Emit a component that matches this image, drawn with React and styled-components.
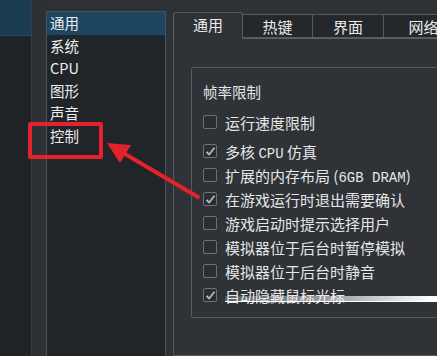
import React from 'react'
import styled, { createGlobalStyle } from 'styled-components'

const GlobalStyle = createGlobalStyle`
  html, body {
    margin: 0;
    padding: 0;
    background: #2e3237;
    overflow: hidden;
  }
`

const Screen = styled.div`
  position: relative;
  display: flex;
  width: 437px;
  height: 356px;
  overflow: hidden;
  background: #2e3237;
  font-family: "Noto Sans CJK SC", "Noto Sans", sans-serif;
  color: #e8e8e8;
`

const OuterEdge = styled.div`
  display: flex;
  flex-direction: column;
  width: 31px;
  flex-shrink: 0;
  background: #1f2226;
`

const EdgeTop = styled.div`
  height: 35px;
  background: #1a3b50;
  border-bottom: 1px solid #26485c;
`

const Strip = styled.div`
  width: 14px;
  flex-shrink: 0;
  background: #2d3136;
  border-left: 1px solid #383c42;
`

const ListBox = styled.div`
  margin-top: 11px;
  width: 118px;
  flex-shrink: 0;
  background: #212428;
  border: 1px solid #4c5157;
  border-bottom: none;
  padding: 0;
`

const ListItem = styled.div`
  height: 22.5px;
  line-height: 22px;
  padding-left: 3px;
  font-size: 14.5px;
  background: ${({ active }) => (active ? '#1c4662' : 'transparent')};
  color: #eeeeee;
`

const Gap = styled.div`
  width: 7px;
  flex-shrink: 0;
`

const TabWidget = styled.div`
  display: flex;
  flex-direction: column;
  width: 320px;
  flex-shrink: 0;
  padding-top: 11px;
`

const TabBar = styled.div`
  display: flex;
  align-items: flex-end;
  height: 27px;
  position: relative;
  z-index: 1;
`

const Tab = styled.div`
  width: ${({ w }) => w}px;
  height: ${({ active }) => (active ? 27 : 24)}px;
  box-sizing: border-box;
  margin-bottom: ${({ active }) => (active ? -1 : 0)}px;
  border: 1px solid #555a60;
  border-left: ${({ first }) => (first ? '1px solid #5a5f66' : 'none')};
  border-bottom: ${({ active }) => (active ? 'none' : '1px solid #555a60')};
  border-radius: ${({ active }) => (active ? '3px 3px 0 0' : '0')};
  background: ${({ active }) => (active ? '#2f3338' : '#24272b')};
  display: flex;
  align-items: center;
  justify-content: center;
  font-size: 15px;
  color: #eaeaea;
  padding-bottom: ${({ active }) => (active ? 3 : 0)}px;
`

const Panel = styled.div`
  flex: 1;
  background: #2f3338;
  border: 1px solid #555a60;
  border-top-color: #5a5f66;
  padding: 28px 0 0 17px;
`

const GroupBox = styled.div`
  width: 300px;
  border: 1px solid #555a60;
  border-radius: 2px;
  padding: 14px 0 10px 11px;
`

const GroupTitle = styled.div`
  font-size: 14.5px;
  line-height: 20px;
  color: #e6e6e6;
  margin-bottom: 8px;
`

const Row = styled.div`
  position: relative;
  display: flex;
  align-items: center;
  gap: 8px;
  height: 24px;
  margin-bottom: ${({ spaced }) => (spaced ? 5 : 0)}px;
  font-size: 15px;
  color: #e6e6e6;
  white-space: nowrap;
`

const Box = styled.div`
  width: 14px;
  height: 14px;
  box-sizing: border-box;
  border: 1px solid #6c7077;
  border-radius: 2px;
  background: #2a2d32;
  display: flex;
  align-items: center;
  justify-content: center;
  flex-shrink: 0;
`

const Latin = styled.span`
  font-family: "Liberation Mono", monospace;
  font-size: 14px;
`

const Streak = styled.div`
  position: absolute;
  left: 22px;
  right: -40px;
  top: 13px;
  height: 5px;
  background: linear-gradient(90deg, rgba(255,255,255,0.2) 0%, rgba(255,255,255,0.55) 35%, #ffffff 65%, #f4f4f4 100%);
  border-bottom: 1px solid #ffffff;
`

const Highlight = styled.div`
  position: absolute;
  left: 28px;
  top: 122px;
  width: 75px;
  height: 37px;
  box-sizing: border-box;
  border: 4px solid #e3222b;
  border-radius: 2px;
`

const Arrow = styled.svg`
  position: absolute;
  left: 0;
  top: 0;
  pointer-events: none;
`

const Check = () => (
  <svg width="11" height="11" viewBox="0 0 11 11">
    <path d="M1.5 5.8 L4.2 8.5 L9.5 1.8" fill="none" stroke="#b9bbbe" strokeWidth="1.8" />
  </svg>
)

const Option = ({ checked, children, spaced, streak }) => (
  <Row spaced={spaced}>
    <Box>{checked && <Check />}</Box>
    <span>{children}</span>
    {streak && <Streak />}
  </Row>
)

const categories = ['通用', '系统', 'CPU', '图形', '声音', '控制']
const tabs = [
  { label: '通用', w: 70 },
  { label: '热键', w: 70 },
  { label: '界面', w: 71 },
  { label: '网络', w: 80 },
]

const App = () => {
  return (
    <Screen>
      <GlobalStyle />
      <OuterEdge>
        <EdgeTop />
      </OuterEdge>
      <Strip />
      <ListBox>
        {categories.map((c, i) => (
          <ListItem key={c} active={i === 0}>{c}</ListItem>
        ))}
      </ListBox>
      <Gap />
      <TabWidget>
        <TabBar>
          {tabs.map((t, i) => (
            <Tab key={t.label} w={t.w} active={i === 0} first={i === 0}>{t.label}</Tab>
          ))}
        </TabBar>
        <Panel>
          <GroupBox>
            <GroupTitle>帧率限制</GroupTitle>
            <Option spaced>运行速度限制</Option>
            <Option checked>多核 <Latin>CPU</Latin> 仿真</Option>
            <Option>扩展的内存布局 (<Latin>6GB DRAM</Latin>)</Option>
            <Option checked>在游戏运行时退出需要确认</Option>
            <Option>游戏启动时提示选择用户</Option>
            <Option>模拟器位于后台时暂停模拟</Option>
            <Option>模拟器位于后台时静音</Option>
            <Option checked streak>自动隐藏鼠标光标</Option>
          </GroupBox>
        </Panel>
      </TabWidget>
      <Highlight />
      <Arrow width="437" height="356">
        <line x1="198" y1="197" x2="120" y2="151" stroke="#e3222b" strokeWidth="4" strokeLinecap="round" />
        <polygon points="107,143 131,145 120,163" fill="#e3222b" />
      </Arrow>
    </Screen>
  )
}

export default App
